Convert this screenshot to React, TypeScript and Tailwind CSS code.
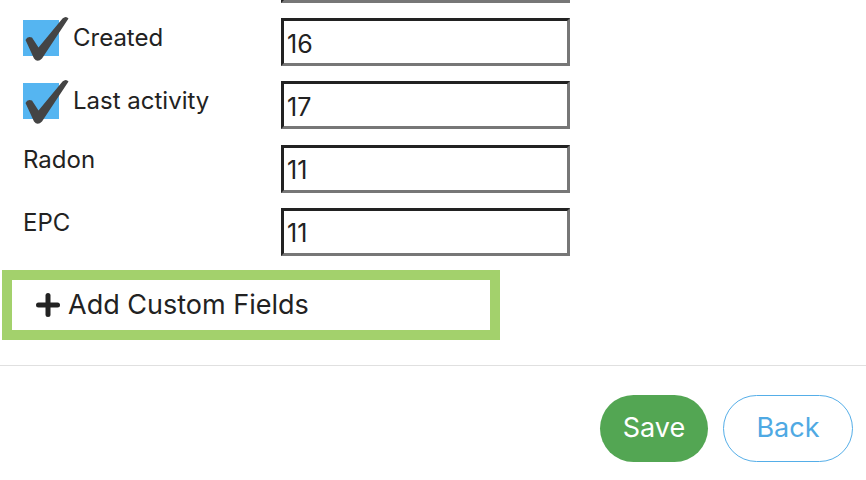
import React from 'react';

type Row = { label: string; value: string; checked?: boolean };

// first row is scrolled almost out of view; only its input's bottom edge shows
const rows: Row[] = [
  { label: '', value: '' },
  { label: 'Created', value: '16', checked: true },
  { label: 'Last activity', value: '17', checked: true },
  { label: 'Radon', value: '11' },
  { label: 'EPC', value: '11' },
];

function CheckBox() {
  return (
    <div className="relative w-[36px] h-[36px] shrink-0 bg-[#55b5f1]">
      {/* heavy check mark spilling over the box */}
      <svg
        className="absolute left-[-3px] top-[-8px]"
        width="52"
        height="52"
        viewBox="0 0 52 52"
      >
        <path
          d="M5.5 28 Q7.5 23.5 12 25.5 L18.5 35.5 L42.5 6.5 Q46 3.5 48.5 6.5 L22 46.5 Q17.5 51 14 46.5 Z"
          fill="#444"
        />
      </svg>
    </div>
  );
}

function FieldRow({ row }: { row: Row }) {
  return (
    <div className="flex items-start">
      <div className="w-[258px] shrink-0">
        {row.checked ? (
          <div className="flex items-center gap-[14px] h-[40px]">
            <CheckBox />
            <span className="text-[24px] leading-[28px]">{row.label}</span>
          </div>
        ) : (
          <span className="block text-[24px] leading-[28px] pt-[1px]">{row.label}</span>
        )}
      </div>
      <input
        readOnly
        value={row.value}
        className="w-[289px] h-[48px] border-[3px] border-t-[#222] border-l-[#222] border-b-[#777] border-r-[#777] pl-[3px] pt-[3px] text-[25px] text-[#222] bg-white outline-none font-['Inter']"
      />
    </div>
  );
}

export default function App() {
  return (
    <div className="w-[866px] h-[480px] overflow-hidden bg-white text-[#222] font-['Inter',sans-serif]">
      <div className="-mt-[45.3px] flex flex-col gap-[15.3px] pl-[23px]">
        {rows.map((r, i) => (
          <FieldRow key={i} row={r} />
        ))}
      </div>

      <div className="mt-[14px] ml-[2px] w-[498px] h-[70px] border-[10px] border-[#a3d16c] flex items-center pl-[23px] gap-[7px]">
        <svg width="26" height="26" viewBox="0 0 26 26">
          <rect x="10.5" y="1" width="5" height="24" rx="2.5" fill="#222" />
          <rect x="1" y="10.5" width="24" height="5" rx="2.5" fill="#222" />
        </svg>
        <span className="text-[27px] leading-none">Add Custom Fields</span>
      </div>

      <div className="mt-[25px] h-px bg-[#e0e0e0]" />

      <div className="mt-[29px] flex justify-end gap-[15px] pr-[13px]">
        <button className="w-[108px] h-[67px] rounded-full bg-[#53a653] text-white text-[27px]">
          Save
        </button>
        <button className="w-[130px] h-[67px] rounded-full border border-[#55aee8] text-[#4fa9e3] text-[27px] bg-white">
          Back
        </button>
      </div>
    </div>
  );
}
